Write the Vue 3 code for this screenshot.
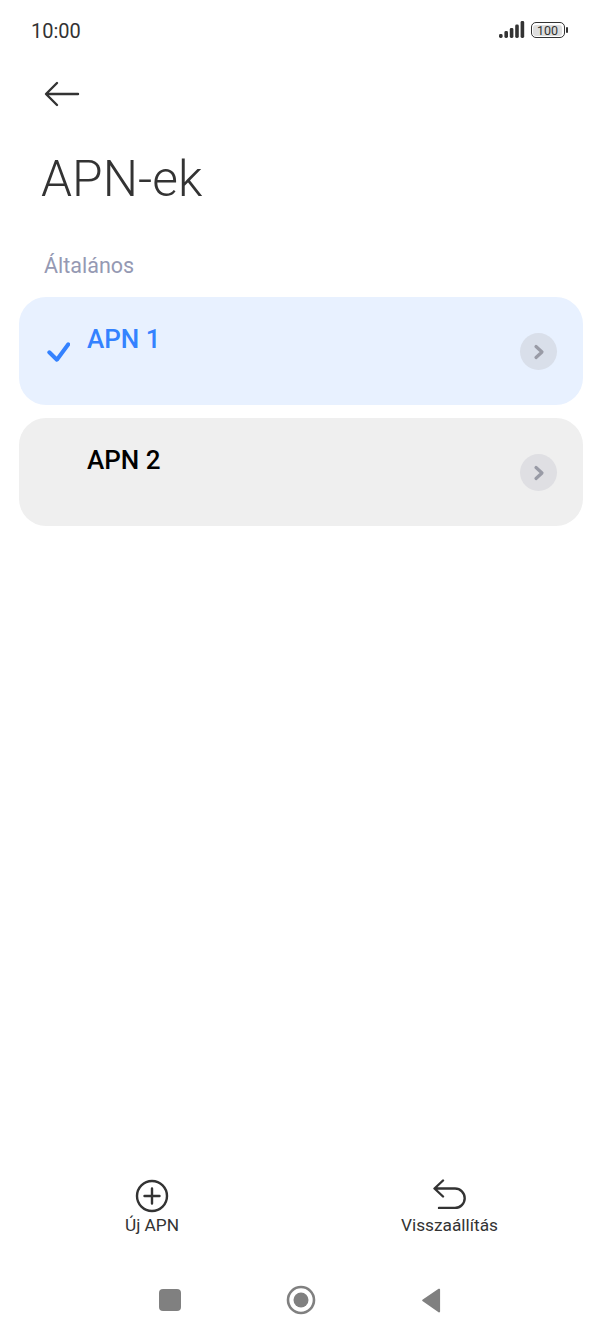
<template>
  <div class="screen">
    <div class="status">
      <span class="time">10:00</span>
      <div class="status-icons">
        <svg width="26" height="18" viewBox="0 0 26 18">
          <rect x="0" y="13" width="3.6" height="4" rx="1.4" fill="#333" />
          <rect x="5.4" y="10" width="3.6" height="7" rx="1.4" fill="#333" />
          <rect x="10.8" y="7" width="3.6" height="10" rx="1.4" fill="#333" />
          <rect x="16.2" y="3.5" width="3.6" height="13.5" rx="1.4" fill="#333" />
          <rect x="21.6" y="0" width="3.6" height="17" rx="1.4" fill="#333" />
        </svg>
        <div class="battery"><span class="level">100</span></div>
        <span class="nub"></span>
      </div>
    </div>

    <div class="back">
      <svg width="36" height="26" viewBox="0 0 36 26" fill="none" stroke="#333" stroke-width="2.4" stroke-linecap="round" stroke-linejoin="round">
        <path d="M34 13H2.5M13 2L2 13l11 11" />
      </svg>
    </div>

    <h1 class="title">APN-ek</h1>
    <div class="section">Általános</div>

    <div class="list">
      <div v-for="apn in apns" :key="apn.name" class="item" :class="{ active: apn.active }">
        <div class="check">
          <svg v-if="apn.active" width="24" height="22" viewBox="0 0 24 22" fill="none" stroke="#3482ff" stroke-width="4" stroke-linecap="round" stroke-linejoin="round">
            <path d="M3.3 11.3l7.6 7.4L22.3 3.3" />
          </svg>
        </div>
        <div class="name">{{ apn.name }}</div>
        <div class="arrow">
          <svg width="12" height="16" viewBox="0 0 12 16" fill="none" stroke="#999ba6" stroke-width="3.2" stroke-linecap="round" stroke-linejoin="round">
            <path d="M3 2.5L9 8l-6 5.5" />
          </svg>
        </div>
      </div>
    </div>

    <div class="spacer"></div>

    <div class="actions">
      <div class="action">
        <svg width="34" height="34" viewBox="0 0 34 34" fill="none" stroke="#333" stroke-width="2.4" stroke-linecap="round">
          <circle cx="17" cy="17" r="15" />
          <path d="M17 9.5v15M9.5 17h15" />
        </svg>
        <span>Új APN</span>
      </div>
      <div class="action">
        <svg width="34" height="34" viewBox="0 0 34 34" fill="none" stroke="#333" stroke-width="2.4" stroke-linecap="round" stroke-linejoin="round">
          <path d="M10 1.5L1.5 9.5 10 17.5M2 9.5h20a9.7 9.7 0 0 1 0 19.4H6" />
        </svg>
        <span>Visszaállítás</span>
      </div>
    </div>

    <div class="nav">
      <span class="nav-square"></span>
      <svg width="30" height="30" viewBox="0 0 30 30">
        <circle cx="15" cy="15" r="13" fill="none" stroke="#808080" stroke-width="2.6" />
        <circle cx="15" cy="15" r="7.5" fill="#808080" />
      </svg>
      <svg width="21" height="25" viewBox="0 0 22 26">
        <path d="M20 1.5v23a1 1 0 0 1-1.6.8L1.5 13.6a1 1 0 0 1 0-1.4L18.4.8A1 1 0 0 1 20 1.5z" fill="#808080" />
      </svg>
    </div>
  </div>
</template>

<script setup>
const apns = [
  { name: 'APN 1', active: true },
  { name: 'APN 2', active: false }
]
</script>

<style>
html,
body {
  margin: 0;
  background: #fff;
}
</style>

<style scoped>
.screen {
  width: 602px;
  height: 1338px;
  display: flex;
  flex-direction: column;
  background: #fff;
  font-family: Roboto, "Liberation Sans", sans-serif;
  box-sizing: border-box;
  overflow: hidden;
}

.status {
  height: 62px;
  padding: 0 34px 0 31px;
  display: flex;
  justify-content: space-between;
  align-items: center;
  flex: none;
}

.time {
  font-size: 20px;
  color: #333;
}

.status-icons {
  display: flex;
  align-items: center;
  padding-bottom: 2px;
}

.battery {
  margin-left: 6px;
  width: 29px;
  height: 11px;
  border: 1.4px solid #333;
  border-radius: 5px;
  padding: 1.5px;
  box-sizing: content-box;
  display: flex;
}

.level {
  flex: 1;
  background: #dedede;
  border-radius: 3px;
  font-size: 12.5px;
  line-height: 11px;
  text-align: center;
  color: #333;
}

.nub {
  width: 2px;
  height: 6px;
  margin-left: 1.5px;
  background: #333;
  border-radius: 1px;
}

.back {
  height: 26px;
  padding: 19px 0 0 44px;
  flex: none;
  display: flex;
}

.title {
  margin: 42px 0 0 41px;
  font-size: 49.7px;
  line-height: 60px;
  font-weight: 300;
  color: #333;
}

.section {
  margin: 44px 0 0 44px;
  font-size: 21.5px;
  line-height: 26px;
  color: #9599b3;
}

.list {
  margin: 18px 19px 0;
  display: flex;
  flex-direction: column;
  gap: 13px;
}

.item {
  height: 108px;
  border-radius: 27px;
  background: #efefef;
  display: flex;
}

.item.active {
  background: #e8f1ff;
}

.check {
  width: 68px;
  padding: 44px 0 0 27px;
  box-sizing: border-box;
  flex: none;
}

.name {
  padding-top: 26px;
  font-size: 26px;
  line-height: 32px;
  font-weight: 500;
  color: #000;
  flex: 1;
}

.active .name {
  color: #3482ff;
}

.arrow {
  width: 37px;
  height: 37px;
  margin: 36px 26px 0 0;
  border-radius: 50%;
  background: #dfdfe3;
  display: flex;
  align-items: center;
  justify-content: center;
  flex: none;
}

.active .arrow {
  background: #d9dfea;
}

.spacer {
  flex: 1;
}

.actions {
  display: grid;
  grid-template-columns: 304px 291px;
  flex: none;
}

.action {
  display: flex;
  flex-direction: column;
  align-items: center;
  font-size: 17.3px;
  line-height: 22px;
  color: #333;
}

.action svg {
  margin-bottom: 1px;
}

.nav {
  height: 76px;
  margin-top: 26px;
  padding: 0 160px 0 159px;
  display: flex;
  align-items: center;
  justify-content: space-between;
  flex: none;
}

.nav-square {
  width: 22px;
  height: 22px;
  border-radius: 4px;
  background: #808080;
}
</style>
